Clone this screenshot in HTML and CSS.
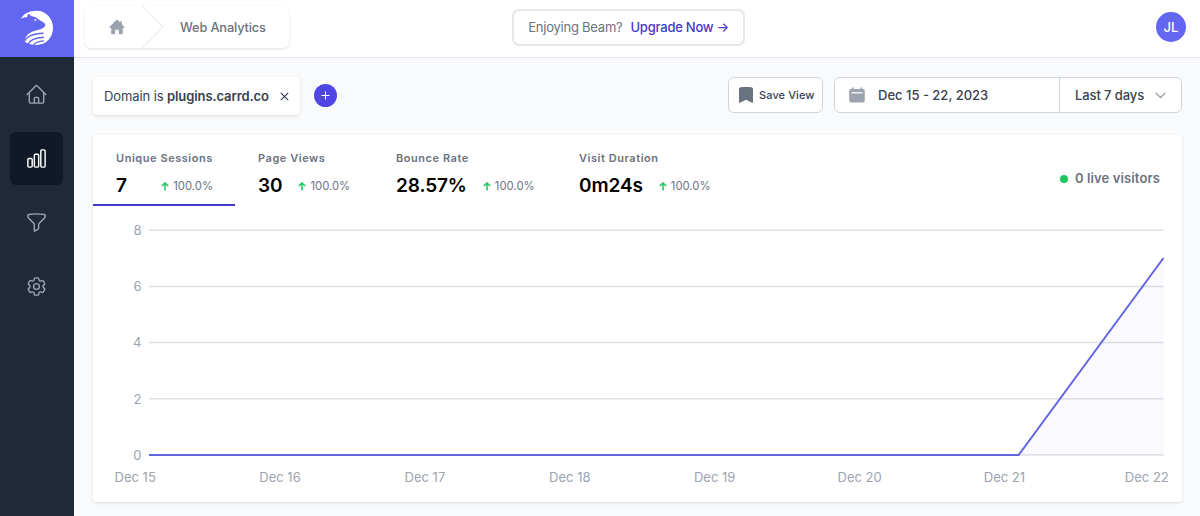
FILE: index.html
```
<!DOCTYPE html>
<html lang="en">
<head>
    <meta charset="UTF-8">
    <meta name="viewport" content="width=device-width, initial-scale=1.0">
    <title>Web Analytics - Beam</title>
    <link rel="stylesheet" href="styles.css">
</head>
<body>
    <aside class="sidebar">
        <a class="logo" href="#">
            <svg width="36" height="38" viewBox="0 0 36 38">
                <path fill="#fff" d="M2 8.800C4.500 3.800 10 .8 17.500.8C27 .8 34 8.500 34 17.800C34 27.800 27 35 17.500 35C12.500 35 8.500 33.800 5.500 31.500C6.300 26 9.500 22.500 16 20.700C21 19.400 26.300 18.300 26.300 14.700C26.300 12.600 22 11.300 19.500 9.200C17 7.100 14.500 7 12.200 6.100L9.300 3.400L7.800 7.400C5.800 7 4 7.600 2 8.800Z"/>
                <path class="logo-lines" d="M5.500 31.500C7.500 26.500 13 23.800 24.500 23.300M9 34.500C10.500 30.500 15 27.800 25 27.300M14.500 35.500C15.500 33 18.500 31.200 25 30.900"/>
                <ellipse cx="16.300" cy="10" rx="1.400" ry=".7" fill="#fff"/>
            </svg>
        </a>
        <nav class="menu">
            <a class="menu-item" href="#">
                <svg class="icon" viewBox="0 0 24 24"><path d="m2.250 12 8.954-8.955c.44-.439 1.152-.439 1.591 0L21.750 12M4.500 9.750v10.125c0 .621.504 1.125 1.125 1.125H9.750v-4.875c0-.621.504-1.125 1.125-1.125h2.250c.621 0 1.125.504 1.125 1.125V21h4.125c.621 0 1.125-.504 1.125-1.125V9.750M8.250 21h8.250"/></svg>
            </a>
            <a class="menu-item active" href="#">
                <svg class="icon" viewBox="0 0 24 24"><path d="M3 13.125C3 12.504 3.504 12 4.125 12h2.250c.621 0 1.125.504 1.125 1.125v6.750C7.500 20.496 6.996 21 6.375 21h-2.250A1.125 1.125 0 0 1 3 19.875v-6.750ZM9.750 8.625c0-.621.504-1.125 1.125-1.125h2.250c.621 0 1.125.504 1.125 1.125v11.250c0 .621-.504 1.125-1.125 1.125h-2.250a1.125 1.125 0 0 1-1.125-1.125V8.625ZM16.500 4.125c0-.621.504-1.125 1.125-1.125h2.250C20.496 3 21 3.504 21 4.125v15.750c0 .621-.504 1.125-1.125 1.125h-2.250a1.125 1.125 0 0 1-1.125-1.125V4.125Z"/></svg>
            </a>
            <a class="menu-item" href="#">
                <svg class="icon" viewBox="0 0 24 24"><path d="M12 3c2.755 0 5.455.232 8.083.678.533.09.917.556.917 1.096v1.044a2.250 2.250 0 0 1-.659 1.591l-5.432 5.432a2.250 2.250 0 0 0-.659 1.591v2.927a2.250 2.250 0 0 1-1.244 2.013L9.750 21v-6.568a2.250 2.250 0 0 0-.659-1.591L3.659 7.409A2.250 2.250 0 0 1 3 5.818V4.774c0-.54.384-1.006.917-1.096A48.320 48.320 0 0 1 12 3Z"/></svg>
            </a>
            <a class="menu-item" href="#">
                <svg class="icon" viewBox="0 0 24 24"><path d="M9.594 3.940c.09-.542.56-.94 1.110-.94h2.593c.55 0 1.020.398 1.110.94l.213 1.281c.063.374.313.686.645.87.074.04.147.083.22.127.325.196.72.257 1.075.124l1.217-.456a1.125 1.125 0 0 1 1.370.49l1.296 2.247a1.125 1.125 0 0 1-.26 1.431l-1.003.827c-.293.241-.438.613-.43.992a7.723 7.723 0 0 1 0 .255c-.008.378.137.75.43.991l1.004.827c.424.35.534.955.26 1.430l-1.298 2.247a1.125 1.125 0 0 1-1.369.491l-1.217-.456c-.355-.133-.75-.072-1.076.124a6.470 6.470 0 0 1-.22.128c-.331.183-.581.495-.644.869l-.213 1.281c-.09.543-.56.940-1.110.940h-2.594c-.55 0-1.019-.398-1.110-.940l-.213-1.281c-.062-.374-.312-.686-.644-.870a6.520 6.520 0 0 1-.22-.127c-.325-.196-.72-.257-1.076-.124l-1.217.456a1.125 1.125 0 0 1-1.369-.490l-1.297-2.247a1.125 1.125 0 0 1 .26-1.431l1.004-.827c.292-.240.437-.613.430-.991a6.932 6.932 0 0 1 0-.255c.007-.380-.138-.751-.430-.992l-1.004-.827a1.125 1.125 0 0 1-.26-1.430l1.297-2.247a1.125 1.125 0 0 1 1.370-.491l1.216.456c.356.133.751.072 1.076-.124.072-.044.146-.086.220-.128.332-.183.582-.495.644-.869l.214-1.280Z"/><path d="M15 12a3 3 0 1 1-6 0 3 3 0 0 1 6 0Z"/></svg>
            </a>
        </nav>
    </aside>

    <div class="page">
        <header class="topbar">
            <nav class="breadcrumb">
                <a class="crumb-home" href="#">
                    <svg width="16" height="16" viewBox="0 0 16 16"><path fill="#9ca3af" d="M8 .8a.9.900 0 0 0-.65.27L.7 7.700a.7.700 0 0 0 .5 1.200H2.200v5.300c0 .6.400 1 1 1h2.300c.3 0 .6-.3.600-.6v-3.100c0-.4.300-.7.700-.7h2.400c.4 0 .7.300.7.700v3.100c0 .3.300.6.600.6h2.300c.6 0 1-.4 1-1V8.900h1a.7.700 0 0 0 .5-1.200L13 5.400V2.400h-1.900v1.200L8.650 1.070A.9.900 0 0 0 8 .8Z"/></svg>
                </a>
                <svg class="crumb-arrow" width="22" height="42" viewBox="0 0 22 42"><path d="M.5 0l20.500 21L.5 42"/></svg>
                <span class="crumb-name">Web Analytics</span>
            </nav>
            <div class="upgrade">
                <span>Enjoying Beam?</span>
                <a href="#">Upgrade Now →</a>
            </div>
            <div class="avatar">JL</div>
        </header>

        <main class="content">
            <div class="toolbar">
                <div class="filter">
                    <span>Domain is <b>plugins.carrd.co</b></span>
                    <svg width="9" height="9" viewBox="0 0 9 9"><path d="M.8.8l7.400 7.400M8.200.8L.8 8.200"/></svg>
                </div>
                <button class="add" aria-label="Add filter">
                    <svg width="9" height="9" viewBox="0 0 9 9"><path d="M4.500.5v8M.5 4.500h8"/></svg>
                </button>
                <button class="save">
                    <svg width="14" height="16" viewBox="0 0 14 16"><path fill="#6b7280" d="M0 2C0 1 .8.400 1.700.3 5 0 9 0 12.300.3c.9.100 1.700.7 1.700 1.700v13.200c0 .5-.5.700-.9.500L7 12.700.9 15.700c-.4.200-.9 0-.9-.5Z"/></svg>
                    Save View
                </button>
                <div class="dates">
                    <div class="date-range">
                        <svg width="16" height="16" viewBox="0 0 16 16"><path fill="#9ca3af" fill-rule="evenodd" d="M3 1c0-.5.300-.8.800-.8s.8.300.8.800v1h6.800V1c0-.5.300-.8.800-.8s.8.300.8.800v1h.8c1.200 0 2 .8 2 2v9.500c0 1.200-.8 2-2 2H2.200c-1.200 0-2-.8-2-2V4c0-1.200.8-2 2-2H3ZM3 5.200a.7.700 0 0 0 0 1.400h10a.7.700 0 0 0 0-1.400Z"/></svg>
                        Dec 15 - 22, 2023
                    </div>
                    <div class="period">
                        Last 7 days
                        <svg width="11" height="7" viewBox="0 0 11 7"><path d="M.8.900l4.700 4.700L10.200.9"/></svg>
                    </div>
                </div>
            </div>

            <section class="card">
                <div class="stats">
                    <div class="stat selected">
                        <h3>Unique Sessions</h3>
                        <p><strong>7</strong><span class="change"><svg class="up" viewBox="0 0 8 9"><path d="M4 8.500V1M.8 4L4 .9 7.200 4"/></svg>100.0%</span></p>
                    </div>
                    <div class="stat">
                        <h3>Page Views</h3>
                        <p><strong>30</strong><span class="change"><svg class="up" viewBox="0 0 8 9"><path d="M4 8.500V1M.8 4L4 .9 7.200 4"/></svg>100.0%</span></p>
                    </div>
                    <div class="stat">
                        <h3>Bounce Rate</h3>
                        <p><strong>28.57%</strong><span class="change"><svg class="up" viewBox="0 0 8 9"><path d="M4 8.500V1M.8 4L4 .9 7.200 4"/></svg>100.0%</span></p>
                    </div>
                    <div class="stat">
                        <h3>Visit Duration</h3>
                        <p><strong>0m24s</strong><span class="change"><svg class="up" viewBox="0 0 8 9"><path d="M4 8.500V1M.8 4L4 .9 7.200 4"/></svg>100.0%</span></p>
                    </div>
                    <div class="live"><i></i>0 live visitors</div>
                </div>
                <svg class="chart" width="1089" height="296" viewBox="0 0 1089 296">
                    <g class="grid">
                        <path d="M56 24.200h1014.500M56 80.400h1014.500M56 136.600h1014.500M56 192.800h1014.500M56 249h1014.500"/>
                    </g>
                    <path class="area" d="M925.600 249L1070.500 52v197Z"/>
                    <path class="line" d="M56 249H925.600L1070.500 52"/>
                    <g class="label y-labels">
                        <text x="48.500" y="29">8</text>
                        <text x="48.500" y="85">6</text>
                        <text x="48.500" y="141">4</text>
                        <text x="48.500" y="197.500">2</text>
                        <text x="48.500" y="254">0</text>
                    </g>
                    <g class="label x-labels">
                        <text x="42.200" y="275.500">Dec 15</text>
                        <text x="187" y="275.500">Dec 16</text>
                        <text x="331.900" y="275.500">Dec 17</text>
                        <text x="476.800" y="275.500">Dec 18</text>
                        <text x="621.700" y="275.500">Dec 19</text>
                        <text x="766.600" y="275.500">Dec 20</text>
                        <text x="911.400" y="275.500">Dec 21</text>
                        <text x="1053.800" y="275.500">Dec 22</text>
                    </g>
                </svg>
            </section>
        </main>
    </div>
</body>
</html>
```
FILE: styles.css
```
:root {
    --indigo: #6366f1;
    --indigo-dark: #4f46e5;
    --gray-50: #f9fafb;
    --gray-300: #d1d5db;
    --gray-400: #9ca3af;
    --gray-500: #6b7280;
    --gray-700: #374151;
    --gray-800: #1f2937;
}

* {
    box-sizing: border-box;
}

body {
    margin: 0;
    height: 516px;
    display: flex;
    overflow: hidden;
    background: var(--gray-50);
    color: var(--gray-700);
    font-family: Inter, "Liberation Sans", sans-serif;
    font-size: 13px;
}

a {
    text-decoration: none;
}

svg {
    display: block;
    flex: none;
    fill: none;
}

button {
    font: inherit;
    color: inherit;
}

/* sidebar */
.sidebar {
    width: 74px;
    flex: none;
    background: var(--gray-800);
}

.logo {
    display: flex;
    align-items: center;
    justify-content: center;
    height: 57px;
    background: var(--indigo);
}

.logo-lines {
    stroke: var(--indigo);
    stroke-width: 1.4;
}

.menu {
    display: flex;
    flex-direction: column;
    align-items: center;
    gap: 11px;
    padding: 11px 1px 0 0;
}

.menu-item {
    display: flex;
    align-items: center;
    justify-content: center;
    width: 53px;
    height: 53px;
    border-radius: 6px;
    color: var(--gray-400);
}

.menu-item.active {
    background: #111827;
    color: #fff;
}

.icon {
    width: 23px;
    height: 23px;
    stroke: currentColor;
    stroke-width: 1.5;
    stroke-linecap: round;
    stroke-linejoin: round;
}

/* top bar */
.page {
    flex: 1;
    min-width: 0;
}

.topbar {
    display: flex;
    align-items: center;
    height: 58px;
    padding: 0 14px 3px 11px;
    background: #fff;
    border-bottom: 1px solid #e5e7eb;
}

.breadcrumb {
    display: flex;
    align-items: center;
    width: 204px;
    height: 42px;
    border-radius: 6px;
    background: #fff;
    box-shadow: 0 1px 3px rgba(0, 0, 0, 0.13);
}

.crumb-home {
    padding: 0 17px 0 24px;
}

.crumb-arrow {
    stroke: #e5e7eb;
}

.crumb-name {
    margin-left: 16px;
    color: var(--gray-500);
    font-size: 12.8px;
    font-weight: 500;
    letter-spacing: -0.15px;
}

.upgrade {
    display: flex;
    align-items: center;
    justify-content: center;
    gap: 8px;
    width: 233px;
    height: 37px;
    margin-left: 223px;
    border: 2px solid #e5e7eb;
    border-radius: 7px;
    color: var(--gray-500);
    letter-spacing: -0.23px;
    white-space: nowrap;
}

.upgrade a {
    color: #4338ca;
    font-weight: 500;
}

.avatar {
    width: 30px;
    height: 30px;
    margin-left: auto;
    border-radius: 50%;
    background: var(--indigo);
    color: #fff;
    font-weight: 500;
    line-height: 31px;
    text-align: center;
}

/* filters */
.content {
    padding: 19px 18px 0 19px;
}

.toolbar {
    display: flex;
    align-items: center;
    height: 38px;
}

.filter {
    display: flex;
    align-items: center;
    justify-content: space-between;
    width: 207px;
    height: 38px;
    padding: 0 11px;
    border-radius: 4px;
    background: #fff;
    box-shadow: 0 1px 3px rgba(0, 0, 0, 0.13);
    white-space: nowrap;
    letter-spacing: -0.1px;
}

.filter b {
    font-weight: 600;
}

.filter svg {
    stroke: var(--gray-700);
    stroke-width: 1.2;
}

.add {
    display: flex;
    align-items: center;
    justify-content: center;
    width: 23px;
    height: 23px;
    margin: 0 0 1px 14px;
    padding: 0;
    border: 0;
    border-radius: 50%;
    background: var(--indigo-dark);
}

.add svg {
    stroke: #fff;
}

.save {
    display: flex;
    align-items: center;
    gap: 6px;
    width: 95px;
    height: 36px;
    margin: 0 11px 2px auto;
    padding: 0 0 0 10px;
    border: 1px solid var(--gray-300);
    border-radius: 6px;
    background: #fff;
    font-size: 11px;
    font-weight: 500;
    letter-spacing: 0.1px;
    white-space: nowrap;
}

.dates {
    display: flex;
    width: 348px;
    height: 36px;
    margin-bottom: 2px;
    border: 1px solid var(--gray-300);
    border-radius: 6px;
    background: #fff;
    font-weight: 500;
}

.date-range {
    display: flex;
    align-items: center;
    gap: 13px;
    width: 225px;
    padding-left: 14px;
    border-right: 1px solid var(--gray-300);
}

.period {
    display: flex;
    align-items: center;
    gap: 11px;
    padding-left: 15px;
    letter-spacing: -0.1px;
}

.period svg {
    stroke: var(--gray-400);
    stroke-width: 1.400;
}

/* stats card */
.card {
    height: 367px;
    margin-top: 20px;
    border-radius: 4px;
    background: #fff;
    box-shadow: 0 1px 3px rgba(0, 0, 0, 0.13);
}

.stats {
    display: flex;
    height: 71px;
}

.stat {
    padding: 16px 22px 0 23px;
}

.stat.selected {
    width: 142px;
    border-bottom: 2px solid #4338ca;
}

.stat:nth-child(2) {
    width: 138px;
}

.stat:nth-child(3) {
    width: 183px;
}

.stat h3 {
    margin: 0;
    color: var(--gray-500);
    font-size: 11px;
    font-weight: 600;
    line-height: 15px;
    letter-spacing: 0.55px;
    white-space: nowrap;
}

.stat p {
    display: flex;
    align-items: center;
    gap: 16px;
    margin: 8px 0 0;
    line-height: 24px;
}

.stat.selected p {
    justify-content: space-between;
}

.stat strong {
    color: #000;
    font-size: 19px;
    font-weight: 600;
    letter-spacing: -0.1px;
}

.change {
    display: flex;
    align-items: center;
    gap: 4px;
    color: var(--gray-500);
    font-size: 11.300px;
}

.up {
    width: 8px;
    height: 9px;
    stroke: #22c55e;
    stroke-width: 1.500;
}

.live {
    display: flex;
    align-items: center;
    gap: 7px;
    height: 20px;
    margin: 33px 22px 0 auto;
    color: var(--gray-500);
    font-weight: 600;
    letter-spacing: 0.12px;
}

.live i {
    width: 8px;
    height: 8px;
    margin-top: 2px;
    border-radius: 50%;
    background: #22c55e;
}

/* chart */
.grid {
    stroke: #e0e1e4;
    stroke-width: 1.500;
}

.area {
    fill: var(--indigo);
    opacity: 0.04;
}

.line {
    stroke: #6366e0;
    stroke-width: 2;
}

.label {
    fill: var(--gray-400);
    font-size: 13px;
}

.y-labels {
    text-anchor: end;
}

.x-labels {
    text-anchor: middle;
}
```
